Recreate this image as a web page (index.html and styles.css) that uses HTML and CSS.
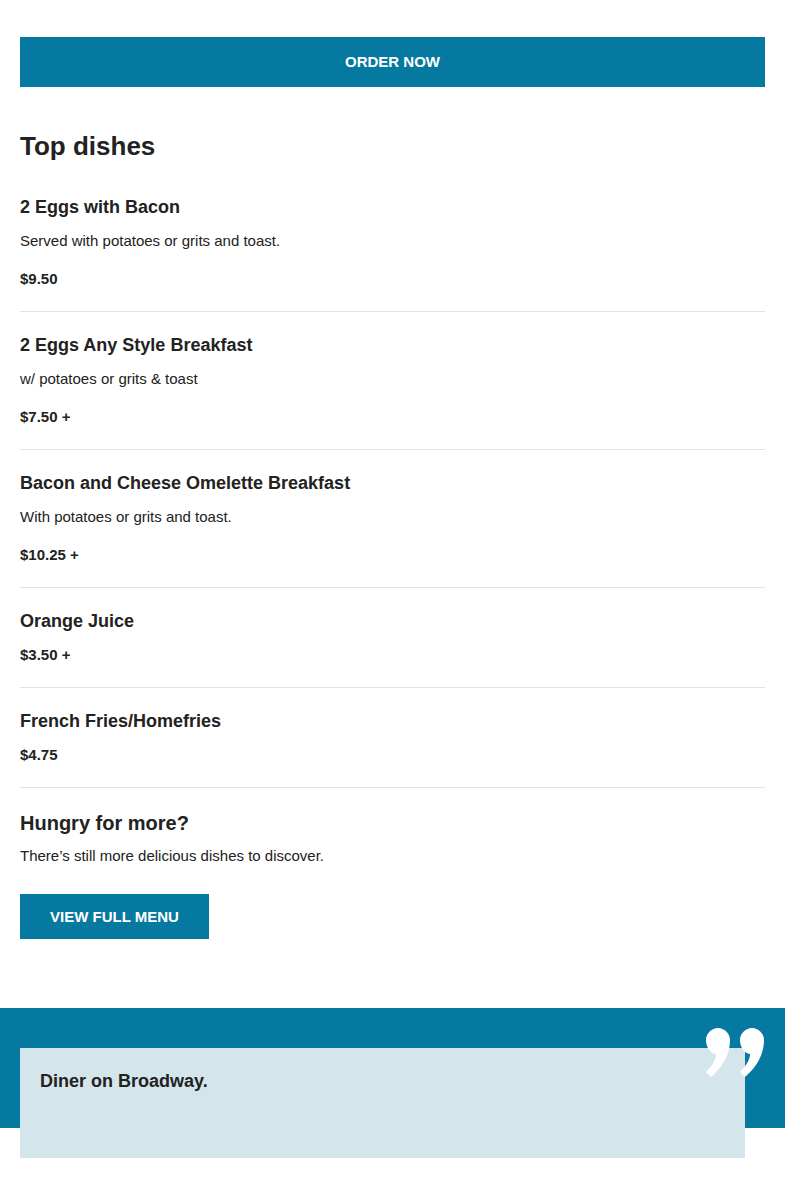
FILE: index.html
```html
<!DOCTYPE html>
<html lang="en">
<head>
<meta charset="utf-8">
<title>Diner on Broadway</title>
<link rel="stylesheet" href="styles.css">
</head>
<body>
<main class="content">
  <a class="order-btn" href="#">ORDER NOW</a>
  <h2 class="section-title">Top dishes</h2>
  <ul class="dish-list">
    <li class="dish">
      <h3 class="dish-name">2 Eggs with Bacon</h3>
      <p class="dish-desc">Served with potatoes or grits and toast.</p>
      <p class="dish-price">$9.50</p>
    </li>
    <li class="dish">
      <h3 class="dish-name">2 Eggs Any Style Breakfast</h3>
      <p class="dish-desc">w/ potatoes or grits &amp; toast</p>
      <p class="dish-price">$7.50 +</p>
    </li>
    <li class="dish">
      <h3 class="dish-name">Bacon and Cheese Omelette Breakfast</h3>
      <p class="dish-desc">With potatoes or grits and toast.</p>
      <p class="dish-price">$10.25 +</p>
    </li>
    <li class="dish">
      <h3 class="dish-name">Orange Juice</h3>
      <p class="dish-price">$3.50 +</p>
    </li>
    <li class="dish">
      <h3 class="dish-name">French Fries/Homefries</h3>
      <p class="dish-price">$4.75</p>
    </li>
  </ul>
  <section class="more">
    <h2 class="more-title">Hungry for more?</h2>
    <p class="more-text">There’s still more delicious dishes to discover.</p>
    <a class="menu-btn" href="#">VIEW FULL MENU</a>
  </section>
</main>
<section class="reviews">
  <svg class="quote-icon" width="60" height="50" viewBox="0 0 60 50" aria-hidden="true">
    <path d="M13 1 C19 1 25 6 25 13 C25 27 18 40 6 50 L1 45 C8 38 11 32 11 27 C5 26 1 20 1 13 C1 6 7 1 13 1 Z" fill="#fff"/>
    <path d="M47 1 C53 1 59 6 59 13 C59 27 52 40 40 50 L35 45 C42 38 45 32 45 27 C39 26 35 20 35 13 C35 6 41 1 47 1 Z" fill="#fff"/>
  </svg>
  <div class="review-card">
    <p class="review-name">Diner on Broadway.</p>
  </div>
</section>
</body>
</html>
```
FILE: styles.css
```css
* {
  box-sizing: border-box;
}

body {
  margin: 0;
  font-family: "Liberation Sans", Arial, sans-serif;
  color: #222;
  background: #fff;
}

.content {
  padding: 37px 20px 0;
}

.order-btn {
  display: block;
  height: 50px;
  line-height: 50px;
  background: #0679a0;
  color: #fff;
  text-align: center;
  font-size: 15px;
  font-weight: bold;
  text-decoration: none;
}

.section-title {
  margin: 42px 0 11px;
  font-size: 26px;
  line-height: 34px;
  font-weight: bold;
}

.dish-list {
  list-style: none;
  margin: 0;
  padding: 0;
}

.dish {
  padding: 21px 0 22px;
  border-bottom: 1px solid #e3e3e3;
}

.dish-name {
  margin: 0 0 12px;
  font-size: 18px;
  line-height: 24px;
  font-weight: bold;
}

.dish-desc {
  margin: 0 0 18px;
  font-size: 15px;
  line-height: 20px;
}

.dish-price {
  margin: 0;
  font-size: 15px;
  line-height: 20px;
  font-weight: bold;
}

.more {
  padding-top: 22px;
}

.more-title {
  margin: 0 0 10px;
  font-size: 20px;
  line-height: 26px;
  font-weight: bold;
}

.more-text {
  margin: 0 0 28px;
  font-size: 15px;
  line-height: 20px;
}

.menu-btn {
  display: inline-block;
  height: 45px;
  line-height: 45px;
  padding: 0 30px;
  background: #0679a0;
  color: #fff;
  font-size: 15px;
  font-weight: bold;
  text-decoration: none;
}

.reviews {
  position: relative;
  margin-top: 69px;
  padding: 40px 40px 0 20px;
  background: linear-gradient(#0679a0 120px, transparent 120px);
}

.quote-icon {
  position: absolute;
  top: 19px;
  right: 20px;
  z-index: 1;
}

.review-card {
  height: 110px;
  padding: 21px 20px;
  background: #d4e5ec;
}

.review-name {
  margin: 0;
  font-size: 18px;
  line-height: 24px;
  font-weight: bold;
}
```
